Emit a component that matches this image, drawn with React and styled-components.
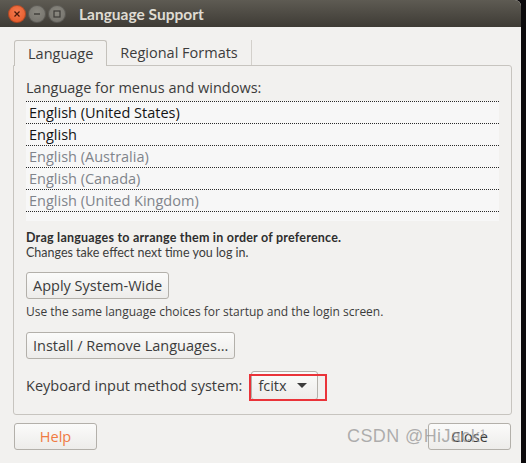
import React from 'react';
import styled, { createGlobalStyle } from 'styled-components';

const GlobalStyle = createGlobalStyle`
  html, body {
    margin: 0;
    padding: 0;
    background: #0c0a0c;
    height: 463px;
    overflow: hidden;
  }
  body {
    font-family: "Open Sans", "DejaVu Sans", sans-serif;
  }
`;

const Window = styled.div`
  width: 521px;
  height: 463px;
  background: #f2f1ef;
  display: flex;
  flex-direction: column;
  border-top-right-radius: 6px;
  overflow: hidden;
  position: relative;
`;

const TitleBar = styled.div`
  height: 27px;
  flex: none;
  background: linear-gradient(#5e5b53, #3e3b35);
  display: flex;
  align-items: center;
  padding-left: 8px;
  gap: 2px;
`;

const Dot = styled.span`
  width: 18px;
  height: 18px;
  border-radius: 50%;
  display: grid;
  place-items: center;
  background: ${p => (p.$close ? 'radial-gradient(circle at 50% 40%, #f47a4f, #e0511f)' : 'radial-gradient(circle at 50% 40%, #8a8880, #6e6c66)')};
  box-shadow: inset 0 0 0 1px rgba(0, 0, 0, 0.25);
  color: ${p => (p.$close ? '#4a1a0a' : '#3d3b37')};
`;

const Title = styled.span`
  margin-left: 11px;
  color: #dfdbd2;
  font-family: Lato, "Open Sans", sans-serif;
  font-weight: 700;
  font-size: 15.5px;
`;

const Body = styled.div`
  flex: 1;
  padding: 13px 9px 0 13px;
  display: flex;
  flex-direction: column;
`;

const Tabs = styled.div`
  display: flex;
  height: 25px;
  align-items: flex-end;
  margin-left: 1px;
  position: relative;
  z-index: 1;
`;

const Tab = styled.div`
  height: ${p => (p.$active ? '26px' : '25px')};
  box-sizing: border-box;
  padding: 0 13px;
  display: flex;
  align-items: center;
  font-size: 14.5px;
  color: #3c3c3c;
  border: ${p => (p.$active ? '1px solid #c4c1bb' : 'none')};
  border-bottom: none;
  border-right: ${p => (p.$active ? '1px solid #c4c1bb' : '1px solid #d3d0cb')};
  border-radius: ${p => (p.$active ? '3px 3px 0 0' : '0')};
  background: #f2f1ef;
  margin-bottom: ${p => (p.$active ? '-1px' : '0')};
`;

const Frame = styled.div`
  height: 350px;
  box-sizing: border-box;
  border: 1px solid #c7c4bf;
  border-radius: 0 3px 3px 3px;
  padding: 8px 12px 0 12px;
  display: flex;
  flex-direction: column;
`;

const Label = styled.div`
  font-size: 14.5px;
  color: #3c3c3c;
  height: 27px;
  display: flex;
  align-items: center;
`;

const List = styled.div`
  background: #f7f7f7;
  width: 473px;
  height: 119px;
  border-top: 1px dotted #2a2a2a;
`;

const Row = styled.div`
  height: 21px;
  border-bottom: 1px dotted #2a2a2a;
  display: flex;
  align-items: center;
  padding-left: 3px;
  font-size: 14.5px;
  color: ${p => (p.$dim ? '#80848b' : '#141414')};
`;

const Hint = styled.div`
  margin-top: 10px;
  font-family: Lato, "Open Sans", sans-serif;
  font-size: 12.5px;
  line-height: 14.5px;
  color: #3c3c3c;
  & b {
    font-weight: 700;
    letter-spacing: 0.22px;
    color: #2e2e2e;
  }
`;

const Button = styled.button`
  font-family: inherit;
  font-size: 14.5px;
  height: 27px;
  box-sizing: border-box;
  padding: 0 6px;
  border: 1px solid #b3b0aa;
  border-radius: 3px;
  background: linear-gradient(#fbfbfa, #edecea);
  color: ${p => (p.$accent ? '#f07a42' : '#3c3c3c')};
  width: ${p => p.$width || 'auto'};
  align-self: flex-start;
  margin-top: ${p => p.$top || '0'};
  cursor: pointer;
`;

const Note = styled.div`
  font-size: 12px;
  color: #3c3c3c;
  margin: 4px 0 12px;
`;

const InputRow = styled.div`
  margin-top: 12px;
  display: flex;
  align-items: center;
  gap: 9px;
  font-size: 14.5px;
  color: #3c3c3c;
`;

const ComboWrap = styled.div`
  position: relative;
`;

const Combo = styled(Button)`
  width: 67px;
  height: 29px;
  display: flex;
  align-items: center;
  justify-content: space-between;
  padding: 0 10px 0 6px;
`;

const Arrow = styled.span`
  width: 0;
  height: 0;
  border-left: 5px solid transparent;
  border-right: 5px solid transparent;
  border-top: 5px solid #3c3c3c;
`;

const Highlight = styled.div`
  position: absolute;
  left: -2px;
  top: 3px;
  width: 74px;
  height: 23px;
  border: 2px solid #ea3339;
  pointer-events: none;
`;

const Footer = styled.div`
  display: flex;
  justify-content: space-between;
  padding: 8px 1px 0 1px;
`;

const Watermark = styled.div`
  position: absolute;
  left: 347px;
  top: 426px;
  font-family: "Liberation Sans", sans-serif;
  font-size: 18px;
  color: rgba(150, 150, 150, 0.75);
  pointer-events: none;
  letter-spacing: 0.4px;
`;

const languages = [
  { name: 'English (United States)' },
  { name: 'English' },
  { name: 'English (Australia)', dim: true },
  { name: 'English (Canada)', dim: true },
  { name: 'English (United Kingdom)', dim: true },
];

const App = () => {
  return (
    <>
      <GlobalStyle />
      <Window>
        <TitleBar>
          <Dot $close>
            <svg width="8" height="8" viewBox="0 0 8 8"><path d="M1.5 1.5l5 5M6.5 1.5l-5 5" stroke="currentColor" strokeWidth="1.3" /></svg>
          </Dot>
          <Dot>
            <svg width="8" height="8" viewBox="0 0 8 8"><path d="M1 4h6" stroke="currentColor" strokeWidth="1.4" /></svg>
          </Dot>
          <Dot>
            <svg width="8" height="8" viewBox="0 0 8 8"><rect x="1" y="1" width="6" height="6" fill="none" stroke="currentColor" strokeWidth="1.2" /></svg>
          </Dot>
          <Title>Language Support</Title>
        </TitleBar>
        <Body>
          <Tabs>
            <Tab $active>Language</Tab>
            <Tab>Regional Formats</Tab>
          </Tabs>
          <Frame>
            <Label>Language for menus and windows:</Label>
            <List>
              {languages.map(l => (
                <Row key={l.name} $dim={l.dim}>{l.name}</Row>
              ))}
            </List>
            <Hint>
              <b>Drag languages to arrange them in order of preference.</b>
              <br />
              Changes take effect next time you log in.
            </Hint>
            <Button $top="12px">Apply System-Wide</Button>
            <Note>Use the same language choices for startup and the login screen.</Note>
            <Button>Install / Remove Languages...</Button>
            <InputRow>
              Keyboard input method system:
              <ComboWrap>
                <Combo as="div">
                  fcitx
                  <Arrow />
                </Combo>
                <Highlight />
              </ComboWrap>
            </InputRow>
          </Frame>
          <Footer>
            <Button $accent $width="83px">Help</Button>
            <Button $width="83px">Close</Button>
          </Footer>
        </Body>
        <Watermark>CSDN @HiJack¹</Watermark>
      </Window>
    </>
  );
};

export default App;
